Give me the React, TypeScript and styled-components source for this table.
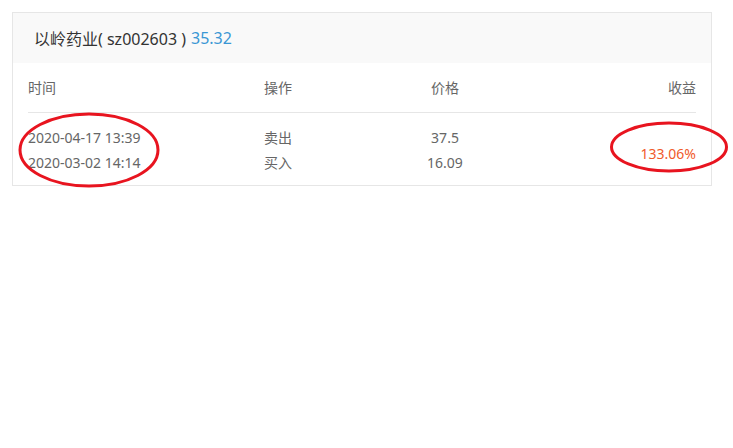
import React from "react";
import styled, { createGlobalStyle } from "styled-components";

const Global = createGlobalStyle`
  html, body { margin: 0; padding: 0; background: #fff; }
  body { font-family: "Noto Sans", "Noto Sans CJK SC", sans-serif; }
`;

const Page = styled.div`
  position: relative;
  width: 733px;
  height: 448px;
  padding: 12px;
  box-sizing: border-box;
`;

const Card = styled.div`
  width: 700px;
  border: 1px solid #e6e6e6;
  box-sizing: border-box;
  background: #fff;
`;

const Header = styled.div`
  height: 50px;
  background: #f9f9f9;
  display: flex;
  align-items: center;
  padding-left: 21px;
  font-size: 16px;
  color: #333;
`;

const Price = styled.span`
  color: #3a97d4;
  margin-left: 5px;
`;

const Table = styled.div`
  margin: 0 15px;
  font-size: 14px;
  color: #666;
`;

const Row = styled.div<{ $head?: boolean }>`
  display: grid;
  grid-template-columns: 236px 126px 110px 1fr;
  align-items: ${(p) => (p.$head ? "center" : "start")};
  height: ${(p) => (p.$head ? "49px" : "auto")};
  border-bottom: ${(p) => (p.$head ? "1px solid #e6e6e6" : "none")};
  padding: ${(p) => (p.$head ? "0" : "12px 0 10px")};
`;

const Cell = styled.div<{ $align?: "left" | "center" | "right" }>`
  text-align: ${(p) => p.$align || "left"};
  display: flex;
  flex-direction: column;
  align-items: ${(p) =>
    p.$align === "center" ? "center" : p.$align === "right" ? "flex-end" : "flex-start"};
  line-height: 25px;
`;

const Profit = styled.div`
  color: #f05a2a;
  line-height: 25px;
  padding-top: 16px;
  text-align: right;
`;

const Mark = styled.svg`
  position: absolute;
  left: 0;
  top: 0;
  pointer-events: none;
`;

export default function App() {
  return (
    <>
      <Global />
      <Page>
        <Card>
          <Header>
            以岭药业( sz002603 )<Price>35.32</Price>
          </Header>
          <Table>
            <Row $head>
              <Cell>时间</Cell>
              <Cell>操作</Cell>
              <Cell $align="center">价格</Cell>
              <Cell $align="right">收益</Cell>
            </Row>
            <Row>
              <Cell>
                <span>2020-04-17 13:39</span>
                <span>2020-03-02 14:14</span>
              </Cell>
              <Cell>
                <span>卖出</span>
                <span>买入</span>
              </Cell>
              <Cell $align="center">
                <span>37.5</span>
                <span>16.09</span>
              </Cell>
              <Profit>133.06%</Profit>
            </Row>
          </Table>
        </Card>
        <Mark width="733" height="448" viewBox="0 0 733 448">
          <ellipse cx="89" cy="150" rx="69" ry="36" fill="none" stroke="#e8141f" strokeWidth="3" />
          <ellipse cx="669" cy="147" rx="57.5" ry="24" fill="none" stroke="#e8141f" strokeWidth="3" />
        </Mark>
      </Page>
    </>
  );
}
